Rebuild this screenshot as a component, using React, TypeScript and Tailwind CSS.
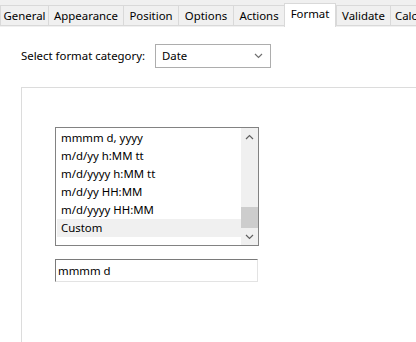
import React from "react";

const tabs = [
  { label: "General", w: "w-[48px]" },
  { label: "Appearance", w: "w-[75px]" },
  { label: "Position", w: "w-[55px]" },
  { label: "Options", w: "w-[55px]" },
  { label: "Actions", w: "w-[51px]" },
  { label: "Format", w: "w-[52px]", active: true },
  { label: "Validate", w: "w-[54px]" },
  { label: "Calculate", w: "px-[4px]" },
];

const formats = [
  "mmmm d, yyyy",
  "m/d/yy h:MM tt",
  "m/d/yyyy h:MM tt",
  "m/d/yy HH:MM",
  "m/d/yyyy HH:MM",
  "Custom",
];

function Chevron({ up, className }: { up?: boolean; className?: string }) {
  return (
    <svg width="9" height="6" viewBox="0 0 9 6" className={className}>
      <path
        d={up ? "M1 5 L4.5 1.5 L8 5" : "M1 1 L4.5 4.5 L8 1"}
        fill="none"
        stroke="currentColor"
        strokeWidth="1.2"
      />
    </svg>
  );
}

export default function App() {
  return (
    <div className="w-[416px] h-[342px] overflow-hidden bg-white text-black text-[11.4px] font-['Noto_Sans',sans-serif] leading-none">
      {/* tab strip */}
      <div className="h-[27px] bg-[#f0f0f0] flex items-start whitespace-nowrap">
        {tabs.map((t) =>
          t.active ? (
            <div
              key={t.label}
              className={`${t.w} shrink-0 mt-[3px] h-[24px] bg-white border-t border-l border-r border-[#d9d9d9] flex items-center justify-center pb-[3px]`}
            >
              {t.label}
            </div>
          ) : (
            <div
              key={t.label}
              className={`${t.w} shrink-0 mt-[5px] h-[21px] border-t border-l border-b border-[#d9d9d9] flex items-center justify-center`}
            >
              {t.label}
            </div>
          )
        )}
      </div>

      {/* category row */}
      <div className="mt-[17px] ml-[21px] flex items-center h-[24px]">
        <span className="w-[134px]">Select format category:</span>
        <div className="w-[116px] h-[24px] border border-[#adadad] bg-white flex items-center justify-between pl-[6px] pr-[7px]">
          <span>Date</span>
          <Chevron className="text-[#707070]" />
        </div>
      </div>

      {/* group panel */}
      <div className="mt-[19px] ml-[21px] h-[260px] border-t border-l border-[#dcdcdc] pl-[33px] pt-[39px]">
        <div className="w-[204px] h-[119px] border border-[#828282] flex">
          <div className="flex-1 pt-[1px] pl-[1px]">
            {formats.map((f) => (
              <div
                key={f}
                className={`h-[18px] flex items-center pl-[4px] ${f === "Custom" ? "bg-[#f0f0f0]" : ""}`}
              >
                {f}
              </div>
            ))}
          </div>
          <div className="w-[17px] bg-[#f0f0f0] flex flex-col">
            <div className="h-[17px] flex items-center justify-center text-[#606060]">
              <Chevron up />
            </div>
            <div className="flex-1 flex flex-col justify-end">
              <div className="h-[21px] bg-[#cdcdcd]" />
            </div>
            <div className="h-[17px] flex items-center justify-center text-[#606060]">
              <Chevron />
            </div>
          </div>
        </div>

        <div className="mt-[13px] w-[203px] h-[23px] border border-t-[#7a7a7a] border-l-[#7a7a7a] border-r-[#e3e3e3] border-b-[#e3e3e3] flex items-center pl-[2px]">
          mmmm d
        </div>
      </div>
    </div>
  );
}
